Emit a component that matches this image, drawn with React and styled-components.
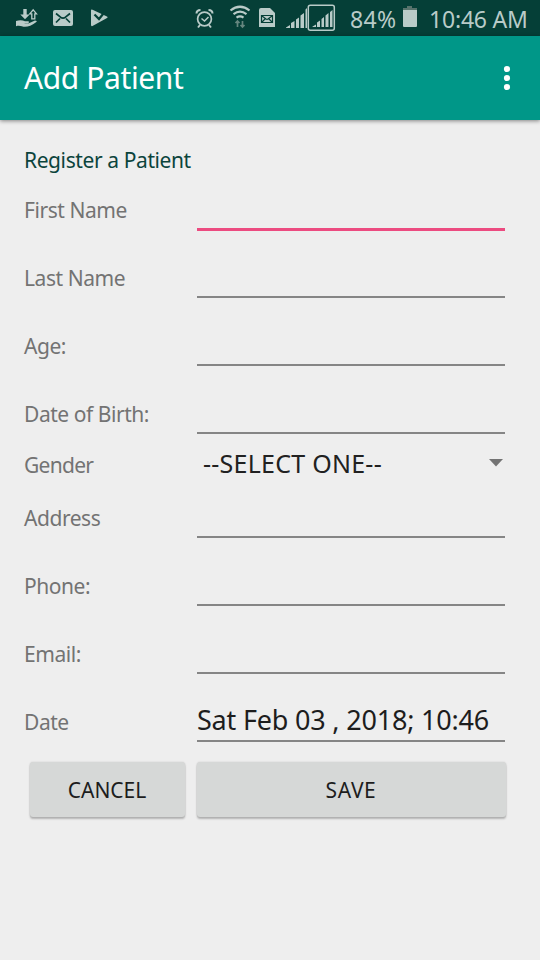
import React from "react";
import styled, { createGlobalStyle } from "styled-components";

const GlobalStyle = createGlobalStyle`
  * { box-sizing: border-box; }
  body { margin: 0; background: #eeeeee; font-family: "Noto Sans", sans-serif; }
`;

const Screen = styled.main`
  width: 540px;
  height: 960px;
  overflow: hidden;
  background: #eeeeee;
  color: #212121;
`;

const StatusBar = styled.header`
  height: 36px;
  display: flex;
  justify-content: space-between;
  background: #053f37;
  color: #b9cbc8;
`;

const StatusText = styled.span`
  font-size: 23px;
  line-height: 38px;
  letter-spacing: ${(p) => p.$tracking || "0"};
  width: ${(p) => p.$width};
  white-space: nowrap;
`;

const StatusGroup = styled.div`
  display: flex;
  height: 36px;
`;

const Toolbar = styled.div`
  height: 84px;
  padding: 0 24px;
  display: flex;
  align-items: center;
  justify-content: space-between;
  background: #009788;
  box-shadow: 0 1px 4px rgba(0, 0, 0, 0.45);
`;

const Title = styled.h1`
  margin: 0;
  color: #fff;
  font-size: 30px;
  font-weight: 400;
  line-height: 84px;
  letter-spacing: -0.4px;
`;

const MenuButton = styled.button`
  border: 0;
  padding: 0;
  margin-right: -1px;
  width: 20px;
  height: 40px;
  background: none;
  display: flex;
`;

const Form = styled.form`
  padding: 24px 35px 0 24px;
  display: flex;
  flex-direction: column;
`;

const SectionTitle = styled.h2`
  margin: 0;
  height: 32px;
  line-height: 32px;
  font-size: 21px;
  font-weight: 400;
  letter-spacing: -0.4px;
  color: #0b443c;
`;

const Row = styled.div`
  display: grid;
  grid-template-columns: 173px 1fr;
  height: ${(p) => p.$height || 68}px;
`;

const Label = styled.label`
  align-self: center;
  padding-bottom: ${(p) => p.$lift || 0}px;
  font-size: 21px;
  line-height: 28px;
  letter-spacing: ${(p) => p.$tracking || "-0.45px"};
  color: #737373;
`;

const Field = styled.input`
  width: 100%;
  height: ${(p) => (p.$focused ? 55 : 54)}px;
  padding: 11px 0 0;
  border: 0;
  border-radius: 0;
  border-bottom: ${(p) => (p.$focused ? "3px solid #ec4b80" : "2px solid #858585")};
  outline: none;
  background: transparent;
  color: #1d1d1d;
  font: 27px "Noto Sans", sans-serif;
  letter-spacing: -0.2px;
`;

const Picker = styled.div`
  display: flex;
  align-items: center;
  justify-content: space-between;
  padding: 0 2px 6px 6px;
  font-size: 25px;
  line-height: 30px;
  letter-spacing: 0.25px;
  white-space: nowrap;
`;

const Actions = styled.div`
  display: grid;
  grid-template-columns: 155px 309px;
  gap: 12px;
  padding: 6px 0 0 5.5px;
`;

const ActionButton = styled.button`
  height: 55px;
  padding: 0;
  border: 0;
  border-radius: 3px;
  background: #d6d8d7;
  box-shadow: 0 2px 2px rgba(0, 0, 0, 0.24), 0 0 2px rgba(0, 0, 0, 0.14);
  color: #1d1d1d;
  font: 21px "Noto Sans", sans-serif;
  letter-spacing: ${(p) => p.$tracking || "0"};
`;

const Icon = styled.svg`
  display: block;
  flex: none;
`;

const BatterySlot = styled.div`
  width: 26px;
`;

function NotificationIcons() {
  return (
    <Icon width="130" height="36" fill="#b9cbc8">
      <path d="M16 21q5-1.500 9 .2h3.500q1.500 1-.5 2h-4q3 1 6-.5l5-2.200q3 0 1 1.800-6 4.500-11 4.500c-3 0-5-2-9-.6z" />
      <path d="M23.300 9h3.400v5.500h3l-4.700 4.700-4.700-4.700h3z" />
      <path d="M33.200 9.800l3.300 4h-1.700v5h-3v-5h-2z" fill="none" stroke="#b9cbc8" strokeWidth="1.300" />
      <rect x="53" y="10" width="20" height="16" rx="2" />
      <path d="M56 13.500l4.500 3.700q2.500 1.800 5 0l4.500-3.700M56 22.500l4-4M70 22.500l-4-4" fill="none" stroke="#053f37" strokeWidth="1.700" />
      <path d="M91 10.500q0-1.500 1.500-.8L107 16.500q1.500.8 0 1.600L92.500 26q-1.500.5-1.500-1z" />
      <path d="M94.500 14.500l4.500 4.500 6.500-8" fill="none" stroke="#053f37" strokeWidth="2.200" />
    </Icon>
  );
}

function RadioIcons() {
  return (
    <Icon width="160" height="36" viewBox="190 0 160 36" fill="none" stroke="#b9cbc8">
      <circle cx="204.500" cy="19" r="6.900" strokeWidth="1.700" />
      <path d="M196.500 13.500q0-3.500 4-3.500M212.500 13.500q0-3.500-4-3.500M200 25l-2 2.500M209 25l2 2.500" strokeWidth="2" />
      <path d="M201.500 18.500l3 2.500 4-4" strokeWidth="1.500" />
      <path d="M230.500 10.500q9.500-7.500 19 0M233.500 14.200q6.500-5 13 0M236.500 17.700q3.500-2.500 7 0" strokeWidth="2.200" />
      <path d="M237.500 27v-6m-2 2l2-2 2 2M242.500 21v6m-2-2l2 2 2-2" stroke="#66867f" strokeWidth="1.700" />
      <path d="M259 10q0-2 2-2h9l5 5v14h-16z" fill="#b9cbc8" stroke="none" />
      <path d="M261.500 15.500h11v7h-11zM262 16l4 3q1 .7 2 0l4-3M262 22l3-3M272 22l-3-3" stroke="#053f37" strokeWidth="1.200" />
      <path d="M286 27.500l4-2.500v3h-4zM291 23l3.500-2v7H291zM296 19.500l3-2v10.500h-3zM300.500 15.500l3.500-2.500v15h-3.500zM305.500 9.500l1.500-1.500v20h-1.500zM312.500 26.500l3.500-2v2.500h-3.500zM317 22.500l3-2v6.500h-3zM321.500 19l2.500-2v10h-2.500zM325.500 15.500l3-2.500v14h-3zM330 12l2.500-2v17H330z" fill="#b9cbc8" stroke="none" />
      <rect x="308.300" y="5.300" width="26" height="25" rx="2" strokeWidth="1.500" />
    </Icon>
  );
}

function BatteryIcon() {
  return (
    <Icon width="14" height="36">
      <path d="M4 6h5v2h5v3H0V8h4z" fill="#58736c" />
      <path d="M0 10h14v16q0 1-1 1H1q-1 0-1-1z" fill="#b9cbc8" />
    </Icon>
  );
}

const beforeGender = [
  { id: "first", label: "First Name", focused: true },
  { id: "last", label: "Last Name" },
  { id: "age", label: "Age:" },
  { id: "birth", label: "Date of Birth:" },
];

const afterGender = [
  { id: "address", label: "Address" },
  { id: "phone", label: "Phone:" },
  { id: "email", label: "Email:" },
  { id: "date", label: "Date", value: "Sat Feb 03 , 2018; 10:46" },
];

function FormRow({ id, label, value = "", focused }) {
  return (
    <Row>
      <Label htmlFor={id}>{label}</Label>
      <Field id={id} defaultValue={value} $focused={focused} />
    </Row>
  );
}

export default function App() {
  return (
    <Screen>
      <GlobalStyle />
      <StatusBar>
        <NotificationIcons />
        <StatusGroup>
          <RadioIcons />
          <StatusText $width="53px" $tracking="0.4px">84%</StatusText>
          <BatterySlot><BatteryIcon /></BatterySlot>
          <StatusText $width="111px" $tracking="-0.2px">10:46 AM</StatusText>
        </StatusGroup>
      </StatusBar>
      <Toolbar>
        <Title>Add Patient</Title>
        <MenuButton aria-label="More options">
          <Icon width="20" height="40" fill="#fff">
            <circle cx="10" cy="11" r="3.100" />
            <circle cx="10" cy="20" r="3.100" />
            <circle cx="10" cy="29" r="3.100" />
          </Icon>
        </MenuButton>
      </Toolbar>
      <Form>
        <SectionTitle>Register a Patient</SectionTitle>
        {beforeGender.map((f) => <FormRow key={f.id} {...f} />)}
        <Row $height={36}>
          <Label $lift={2} $tracking="-0.7px">Gender</Label>
          <Picker>
            <span>--SELECT ONE--</span>
            <Icon width="14" height="8" fill="#737373"><path d="M0 0h14L7 7.500z" /></Icon>
          </Picker>
        </Row>
        {afterGender.map((f) => <FormRow key={f.id} {...f} />)}
        <Actions>
          <ActionButton type="button">CANCEL</ActionButton>
          <ActionButton type="button" $tracking="0.6px">SAVE</ActionButton>
        </Actions>
      </Form>
    </Screen>
  );
}
